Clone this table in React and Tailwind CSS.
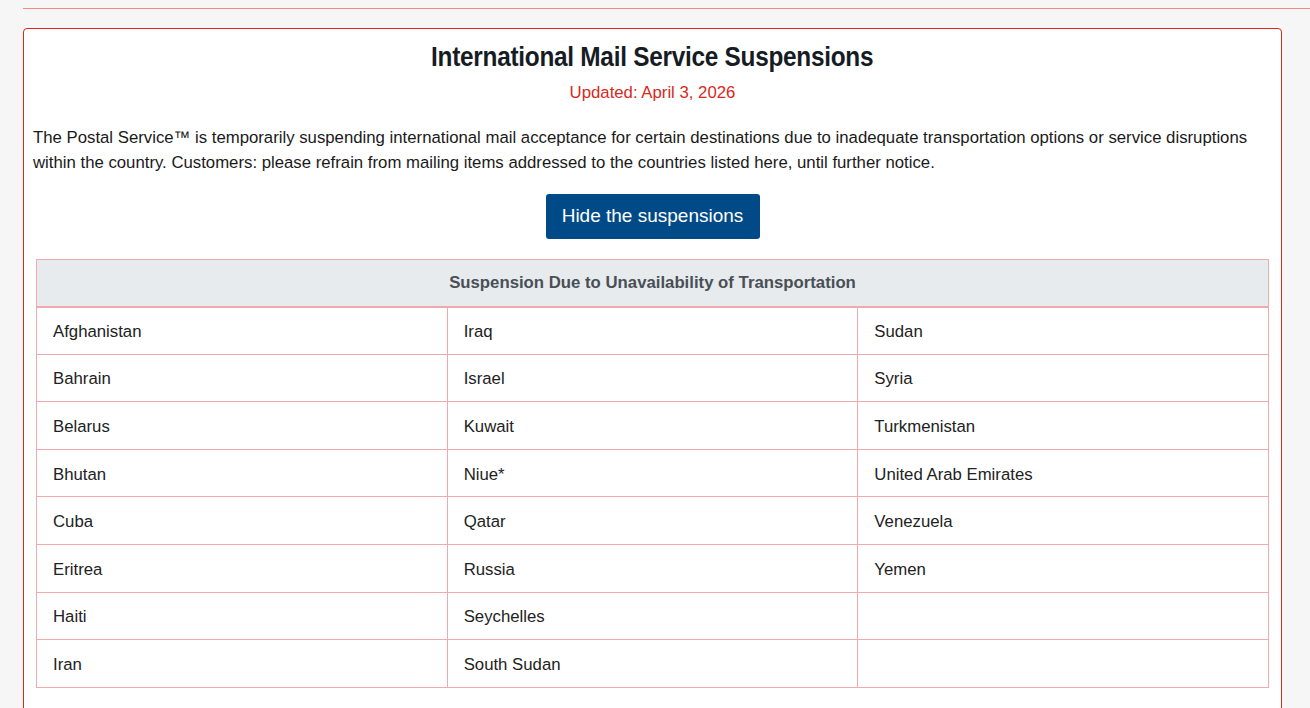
const rows = [
  ["Afghanistan", "Iraq", "Sudan"],
  ["Bahrain", "Israel", "Syria"],
  ["Belarus", "Kuwait", "Turkmenistan"],
  ["Bhutan", "Niue*", "United Arab Emirates"],
  ["Cuba", "Qatar", "Venezuela"],
  ["Eritrea", "Russia", "Yemen"],
  ["Haiti", "Seychelles", ""],
  ["Iran", "South Sudan", ""],
];

export default function App() {
  return (
    <div className="min-h-[708px] bg-[#f6f6f6] pl-[23px] pt-[8px] font-['Liberation_Sans',Arial,sans-serif]">
      <div className="h-px bg-[#f28b82]" />
      <div className="mr-[28px] mt-[19px] rounded-[4px] border border-[#d8291c] bg-white px-[9px] pb-6 pt-[11px]">
        <h1 className="text-center text-[28px] font-bold leading-[34px] tracking-[-0.3px] text-[#161c24]">
          <span className="inline-block scale-x-[0.87]">International Mail Service Suspensions</span>
        </h1>
        <p className="mt-[9px] text-center text-[16.75px] leading-[20px] text-[#d8291c]">
          Updated: April 3, 2026
        </p>
        <p className="mt-[22px] text-[16.75px] leading-[25px] text-[#1a1a1a]">
          The Postal Service™ is temporarily suspending international mail acceptance for certain destinations due to inadequate transportation options or service disruptions within the country. Customers: please refrain from mailing items addressed to the countries listed here, until further notice.
        </p>
        <div className="mt-[19px] flex justify-center">
          <button className="h-[45px] w-[214px] rounded-[3px] bg-[#004b87] text-[19px] text-white">
            Hide the suspensions
          </button>
        </div>
        <div className="mx-[3px] mt-[20px]">
          <table className="w-full table-fixed border-collapse text-[16.75px] text-[#222]">
            <thead>
              <tr>
                <th
                  colSpan={3}
                  className="h-[47px] border border-b-2 border-[#f0a9ad] bg-[#e7ebee] text-center font-bold text-[#4a4f56]"
                >
                  Suspension Due to Unavailability of Transportation
                </th>
              </tr>
            </thead>
            <tbody>
              {rows.map((r, i) => (
                <tr key={i} className="h-[47.6px]">
                  {r.map((c, j) => (
                    <td key={j} className="border border-[#f0a9ad] pl-[16px] pt-[2px] align-middle font-normal">
                      {c}
                    </td>
                  ))}
                </tr>
              ))}
            </tbody>
          </table>
        </div>
      </div>
    </div>
  );
}
